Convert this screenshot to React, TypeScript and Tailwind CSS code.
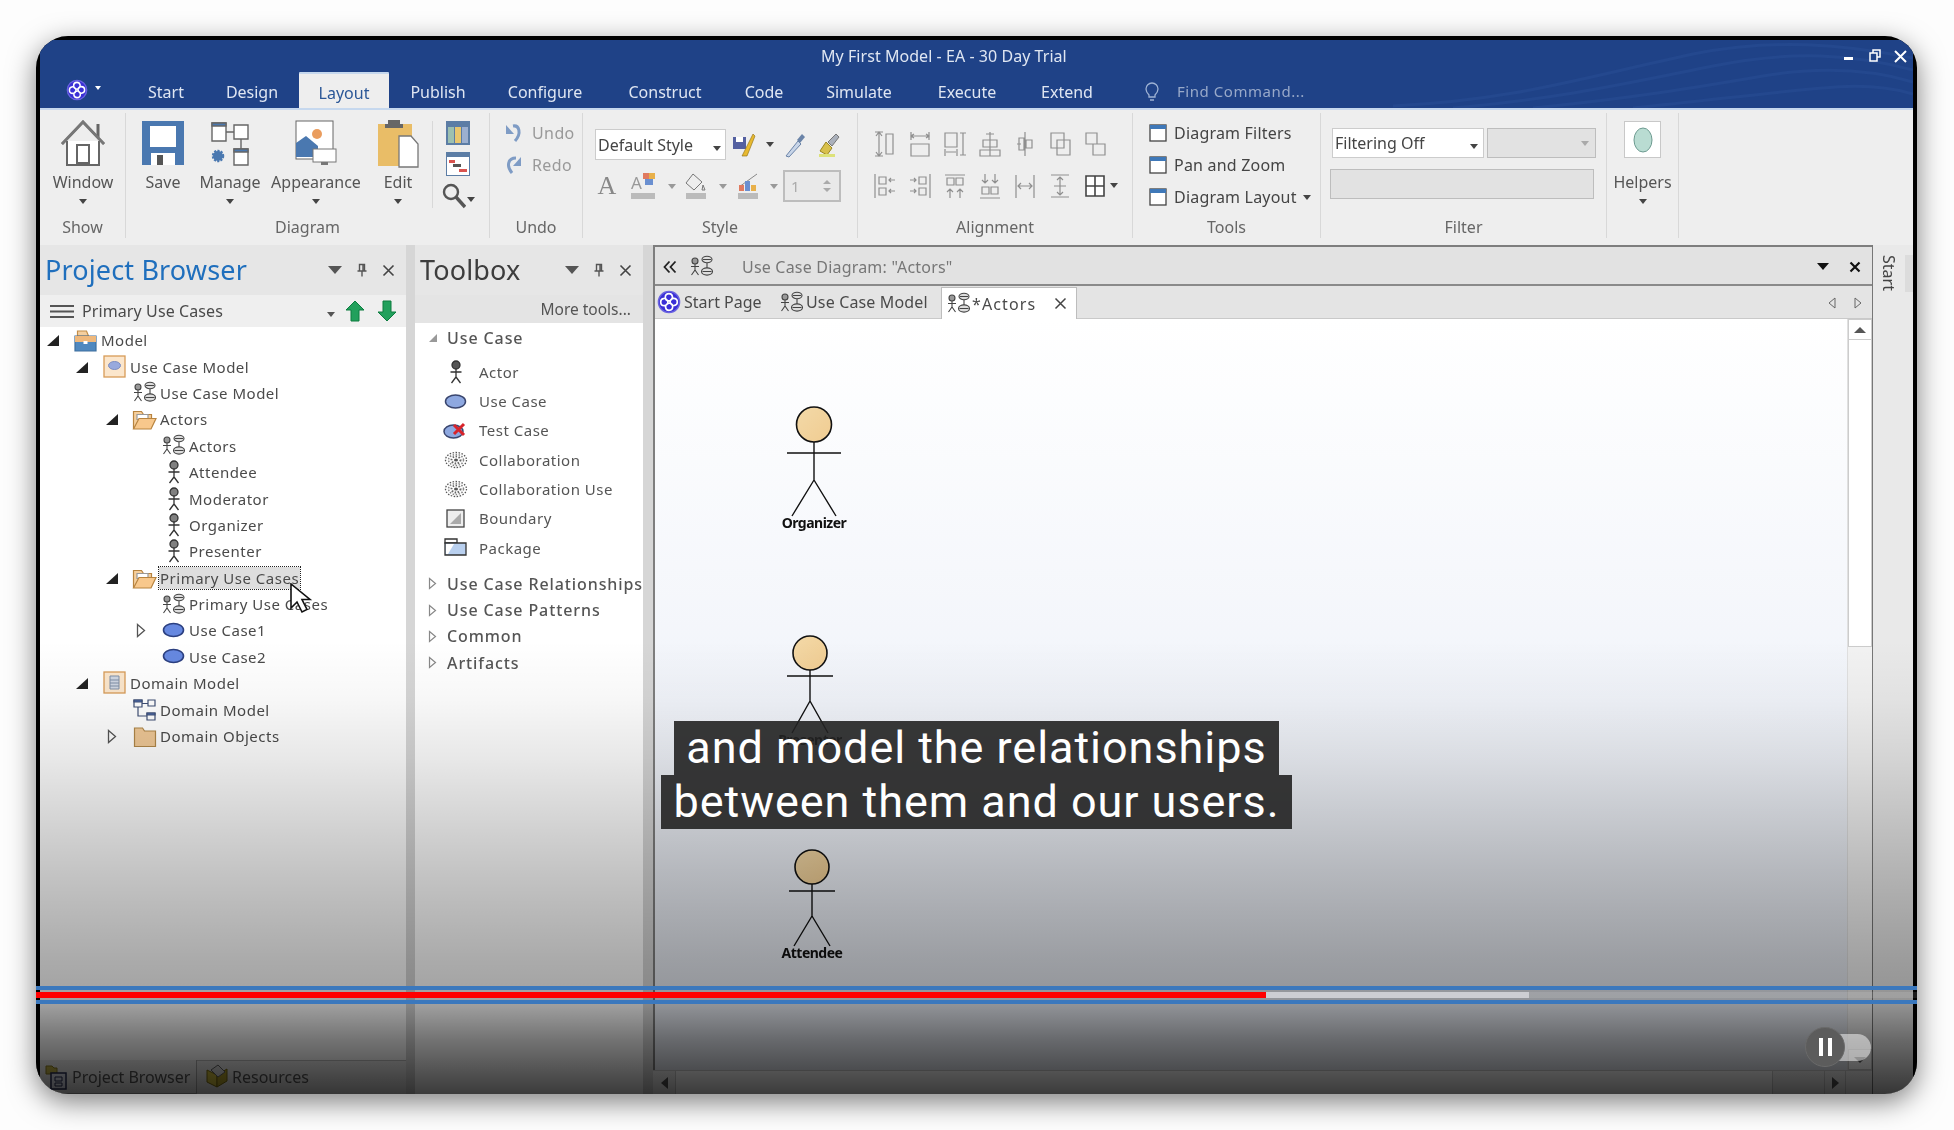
import { ReactNode } from 'react'

function Caret({ className = 'border-t-[#444]' }: { className?: string }) {
  return <span className={`inline-block w-0 h-0 border-x-[4px] border-x-transparent border-t-[5px] ${className}`} />
}

function Logo({ size = 26 }: { size?: number }) {
  return (
    <svg width={size} height={size} viewBox="0 0 26 26" fill="none">
      <circle cx="13" cy="13" r="11.5" fill="#3a2fd6" stroke="#6a63e0" strokeWidth="1.5" />
      <path d="M13 4c4 0 5 5 2 7s-6 0-6-3 2-4 4-4zM13 22c-4 0-5-5-2-7s6 0 6 3-2 4-4 4zM4 13c0-4 5-5 7-2s0 6-3 6-4-2-4-4zM22 13c0 4-5 5-7 2s0-6 3-6 4 2 4 4z" stroke="#fff" strokeWidth="1.8" />
    </svg>
  )
}

function ActorIcon({ dark = false }: { dark?: boolean }) {
  return (
    <svg width="14" height="24" viewBox="0 0 14 24" fill="none" stroke="#333" strokeWidth="1.3">
      <circle cx="7" cy="5" r="4" fill={dark ? '#555' : '#808080'} />
      <path d="M7 9v8M1.5 12h11M7 17l-4.5 6M7 17l4.5 6" />
    </svg>
  )
}

function DiagramIcon() {
  return (
    <svg width="24" height="23" viewBox="0 0 24 23" fill="none" stroke="#444" strokeWidth="1.1">
      <circle cx="5" cy="6" r="3" fill="#999" />
      <path d="M5 9v6M1 11.5h8M5 15l-3.5 5M5 15l3.5 5" />
      <ellipse cx="17" cy="4.5" rx="5" ry="3.2" fill="#ddd" />
      <ellipse cx="17" cy="16.5" rx="5.5" ry="3.6" fill="#ddd" />
      <path d="M13 4.5h8M12.5 16.5h9M17 8v5" />
    </svg>
  )
}

function FolderOpen() {
  return (
    <svg width="25" height="24" viewBox="0 0 25 24" fill="none" stroke="#b8843f" strokeWidth="1.2">
      <path d="M1.5 22V4.5h8l2 3h8v4" fill="#f6cf9c" />
      <path d="M5 7.5h11v5H5z" fill="#fff" stroke="#999" />
      <path d="M1.5 22 7 11.5h17L19 22z" fill="#f8c88c" />
    </svg>
  )
}

function FolderClosed() {
  return (
    <svg width="24" height="23" viewBox="0 0 24 23" fill="#efc896" stroke="#b08749" strokeWidth="1.2">
      <path d="M1.5 21.5V3h8l2 3h11v15.5z" />
    </svg>
  )
}

function ModelIcon() {
  return (
    <svg width="24" height="23" viewBox="0 0 24 23" strokeWidth="1.2">
      <path d="M3.5 7V2h9l2 5z" fill="#f4cf9f" stroke="#c38d47" />
      <path d="M1 7h21v15H1z" fill="#4f88bf" stroke="#3e6f9e" />
      <path d="M1 7h21v6H1z" fill="#efb87b" stroke="none" />
      <rect x="9.5" y="12" width="4" height="3" fill="#fff" />
    </svg>
  )
}

function PackageSquare({ kind }: { kind: 'usecase' | 'domain' }) {
  return (
    <svg width="24" height="24" viewBox="0 0 24 24">
      <rect x="1" y="1" width="21" height="21" fill="#fbe6cc" stroke="#d79c58" strokeWidth="1.3" />
      {kind === 'usecase' ? (
        <ellipse cx="11.5" cy="10.5" rx="6" ry="4" fill="#98a9dd" stroke="#7d8dc0" />
      ) : (
        <path d="M7 5h9v13H7zM7 9h9M7 12h9M7 15h9" fill="#cfd6e2" stroke="#7f8ea5" />
      )}
    </svg>
  )
}

function DomainDiagramIcon() {
  return (
    <svg width="24" height="23" viewBox="0 0 24 23" fill="#fff" stroke="#3f4f75" strokeWidth="1.2">
      <path d="M1 2h8v7H1zM15 2h7v6h-7zM14 15h8v7h-8zM9 5.5h6M5 9v9h9" />
      <path d="M14 15h8v2h-8z" fill="#4f6fb5" />
      <path d="M1 2h8v2H1z" fill="#4f6fb5" />
    </svg>
  )
}

function UseCaseEllipse() {
  return (
    <svg width="23" height="17" viewBox="0 0 23 17">
      <ellipse cx="11.5" cy="8" rx="10" ry="6.500" fill="#6688e0" stroke="#2b3f80" strokeWidth="1.6" />
    </svg>
  )
}

function Expander({ open }: { open: boolean }) {
  return open ? (
    <svg width="14" height="14" viewBox="0 0 14 14"><path d="M13 2v11H1z" fill="#222" /></svg>
  ) : (
    <svg width="10" height="15" viewBox="0 0 10 15" fill="#fff" stroke="#555" strokeWidth="1.3"><path d="M1.500 1.500 8.500 7.500 1.500 13.500z" /></svg>
  )
}

type TreeNode = { label: string; depth: 0 | 1 | 2 | 3; exp?: boolean; icon: ReactNode; selected?: boolean }

const treeNodes: TreeNode[] = [
  { label: 'Model', depth: 0, exp: true, icon: <ModelIcon /> },
  { label: 'Use Case Model', depth: 1, exp: true, icon: <PackageSquare kind="usecase" /> },
  { label: 'Use Case Model', depth: 2, icon: <DiagramIcon /> },
  { label: 'Actors', depth: 2, exp: true, icon: <FolderOpen /> },
  { label: 'Actors', depth: 3, icon: <DiagramIcon /> },
  { label: 'Attendee', depth: 3, icon: <ActorIcon /> },
  { label: 'Moderator', depth: 3, icon: <ActorIcon /> },
  { label: 'Organizer', depth: 3, icon: <ActorIcon /> },
  { label: 'Presenter', depth: 3, icon: <ActorIcon /> },
  { label: 'Primary Use Cases', depth: 2, exp: true, icon: <FolderOpen />, selected: true },
  { label: 'Primary Use Cases', depth: 3, icon: <DiagramIcon /> },
  { label: 'Use Case1', depth: 3, exp: false, icon: <UseCaseEllipse /> },
  { label: 'Use Case2', depth: 3, icon: <UseCaseEllipse /> },
  { label: 'Domain Model', depth: 1, exp: true, icon: <PackageSquare kind="domain" /> },
  { label: 'Domain Model', depth: 2, icon: <DomainDiagramIcon /> },
  { label: 'Domain Objects', depth: 2, exp: false, icon: <FolderClosed /> },
]

const depthPad = ['pl-[6px]', 'pl-[35px]', 'pl-[65px]', 'pl-[94px]']

function ProjectTree() {
  return (
    <div className="relative flex-1 bg-white overflow-hidden">
      {treeNodes.map((n, i) => (
        <div key={i} className={`flex items-center h-[26.4px] ${depthPad[n.depth]}`}>
          <span className="w-[14px] flex justify-center shrink-0">
            {n.exp === undefined ? null : <Expander open={n.exp} />}
          </span>
          <span className="w-[13px] shrink-0" />
          <span className="w-[28px] flex justify-center shrink-0 pr-[3px]">{n.icon}</span>
          <span className={`text-[15px] tracking-[0.5px] text-[#4a4a4a] whitespace-nowrap leading-[22px] ${n.selected ? 'bg-[#dedede] outline-1 outline-dotted outline-[#222] px-[1px] -ml-[1px]' : ''}`}>
            {n.label}
          </span>
        </div>
      ))}
      <svg className="absolute left-[249px] top-[256px]" width="24" height="32" viewBox="0 0 24 32">
        <path d="M2 1v24l6-6 5 10 5-2.500-5-10h8z" fill="#fff" stroke="#111" strokeWidth="1.6" />
      </svg>
    </div>
  )
}

function PanelHeader({ title, blue }: { title: string; blue?: boolean }) {
  return (
    <div className="flex items-center h-[50px] bg-[#e6e6e6] shrink-0">
      <span className={`ml-[5px] text-[27px] tracking-[0.15px] whitespace-nowrap ${blue ? 'text-[#1f6fbd]' : 'text-[#3d3d3d]'}`}>{title}</span>
      <span className="flex items-center ml-auto">
        <span className="w-0 h-0 border-x-[7px] border-x-transparent border-t-[8px] border-t-[#555]" />
        <svg className="ml-[14px]" width="12" height="14" viewBox="0 0 12 14" fill="none" stroke="#555" strokeWidth="1.4"><path d="M3.500 1.500h5v6.500h-5zM1.500 8h9M6 8v5.500M7 2v6" /></svg>
        <svg className="ml-[14px] mr-[11px]" width="13" height="13" viewBox="0 0 13 13" stroke="#444" strokeWidth="1.6"><path d="M1.500 1.500l10 10M11.500 1.500l-10 10" /></svg>
      </span>
    </div>
  )
}

function ProjectBrowser() {
  return (
    <div className="w-[366px] shrink-0 flex flex-col">
      <PanelHeader title="Project Browser" blue />
      <div className="flex items-center h-[32px] bg-[#efefef] shrink-0">
        <svg className="ml-[10px]" width="24" height="15" viewBox="0 0 24 15" stroke="#555" strokeWidth="2.200"><path d="M0 2h24M0 7.500h24M0 13h24" /></svg>
        <span className="ml-[8px] text-[16px] tracking-[0.1px] text-[#4a4a4a] whitespace-nowrap">Primary Use Cases</span>
        <span className="ml-auto"><Caret className="border-t-[#555]" /></span>
        <svg className="ml-[10px]" width="20" height="22" viewBox="0 0 20 22"><path d="M10 1l9 9h-5v11H6V10H1z" fill="#22a05c" stroke="#0c7d3f" /></svg>
        <svg className="ml-[12px] mr-[9px]" width="20" height="22" viewBox="0 0 20 22"><path d="M10 21l9-9h-5V1H6v11H1z" fill="#22a05c" stroke="#0c7d3f" /></svg>
      </div>
      <ProjectTree />
      <div className="flex items-end h-[34px] bg-[#e8e8e8] border-t border-[#bbb] shrink-0">
        <div className="w-[157px] h-[34px] flex items-center -mt-px bg-[#eee] border-r border-b border-[#aaa]">
          <svg className="ml-[5px]" width="24" height="26" viewBox="0 0 24 26"><path d="M1 2h6l2 2h3v6H1z" fill="#c9b94b" stroke="#8b7d20" /><rect x="6" y="9" width="15" height="16" fill="#e4e7f4" stroke="#272d55" strokeWidth="1.5" /><path d="M10 13h7v4h-7zM10 19h7v3h-7z" fill="none" stroke="#272d55" /></svg>
          <span className="ml-[3px] text-[16px] text-[#555] whitespace-nowrap">Project Browser</span>
        </div>
        <div className="h-[34px] flex items-center">
          <svg className="ml-[8px]" width="24" height="26" viewBox="0 0 24 26"><path d="M2 6l10 5v12L2 18z" fill="#d7c540" stroke="#7c6d10" /><path d="M12 11l10-6v12l-10 6z" fill="#bba82e" stroke="#7c6d10" /><path d="M6 6l7-5 7 7-7 5z" fill="#ddd" stroke="#666" /></svg>
          <span className="ml-[3px] text-[16px] text-[#555] whitespace-nowrap">Resources</span>
        </div>
      </div>
    </div>
  )
}

function DitherEllipse() {
  return (
    <svg width="24" height="18" viewBox="0 0 24 18" fill="none" stroke="#555" strokeDasharray="1.500 1.500">
      <ellipse cx="12" cy="9" rx="10.500" ry="7.500" strokeWidth="1.300" />
      <ellipse cx="12" cy="9" rx="7.500" ry="5.500" stroke="#888" strokeWidth="1.500" />
      <ellipse cx="12" cy="9" rx="4.500" ry="3.500" stroke="#666" strokeWidth="2" />
      <ellipse cx="12" cy="9" rx="2" ry="1.500" fill="#555" strokeWidth="0" />
    </svg>
  )
}

const toolItems: { label: string; icon: ReactNode }[] = [
  { label: 'Actor', icon: <ActorIcon dark /> },
  {
    label: 'Use Case',
    icon: (
      <svg width="23" height="17" viewBox="0 0 23 17"><ellipse cx="11.500" cy="8.500" rx="10" ry="6.500" fill="#8ea8e0" stroke="#39456e" strokeWidth="1.500" /></svg>
    ),
  },
  {
    label: 'Test Case',
    icon: (
      <svg width="25" height="19" viewBox="0 0 25 19">
        <ellipse cx="10.500" cy="10.500" rx="9.500" ry="6.500" fill="#8ea8e0" stroke="#39456e" strokeWidth="1.500" />
        <path d="M11 4l10 10M21 3L11 13" stroke="#d8232a" strokeWidth="3" />
      </svg>
    ),
  },
  { label: 'Collaboration', icon: <DitherEllipse /> },
  { label: 'Collaboration Use', icon: <DitherEllipse /> },
  {
    label: 'Boundary',
    icon: (
      <svg width="20" height="20" viewBox="0 0 20 20">
        <rect x="1" y="1" width="17" height="17" fill="#eee" stroke="#444" strokeWidth="1.300" />
        <path d="M4 15 15 4v11z" fill="#aaa" />
      </svg>
    ),
  },
  {
    label: 'Package',
    icon: (
      <svg width="23" height="19" viewBox="0 0 23 19">
        <path d="M1 1h12v4H1z" fill="#fff" stroke="#333" strokeWidth="1.300" />
        <path d="M1 5h21v12H1z" fill="#b9d0ef" stroke="#333" strokeWidth="1.300" />
        <path d="M2 6h8L4 16H2z" fill="#fff" />
      </svg>
    ),
  },
]

function ToolHeader({ label, open }: { label: string; open?: boolean }) {
  return (
    <div className="flex items-center h-[26.4px]">
      <span className="w-[32px] flex justify-center pl-[3px] shrink-0">
        {open ? (
          <svg width="10" height="10" viewBox="0 0 10 10"><path d="M9 1v8H1z" fill="#999" /></svg>
        ) : (
          <svg width="9" height="13" viewBox="0 0 9 13" fill="#fff" stroke="#888" strokeWidth="1.200"><path d="M1.500 1.500 7.500 6.500 1.500 11.500z" /></svg>
        )}
      </span>
      <span className="text-[16px] font-medium tracking-[0.9px] text-[#555] whitespace-nowrap">{label}</span>
    </div>
  )
}

function Toolbox() {
  return (
    <div className="w-[228px] shrink-0 flex flex-col">
      <PanelHeader title="Toolbox" />
      <div className="h-[28px] bg-[#e4e4e4] text-right pr-[12px] text-[15.5px] leading-[28px] text-[#555] whitespace-nowrap shrink-0">More tools...</div>
      <div className="flex-1 bg-white overflow-hidden pt-[2px]">
        <ToolHeader label="Use Case" open />
        <div className="mt-[6px]">
          {toolItems.map((t) => (
            <div key={t.label} className="flex items-center h-[29.3px]">
              <span className="w-[64px] shrink-0 flex justify-center pl-[22px] pr-[5px]">{t.icon}</span>
              <span className="text-[15px] text-[#555] tracking-[0.5px] whitespace-nowrap">{t.label}</span>
            </div>
          ))}
        </div>
        <div className="mt-[8px]">
          {['Use Case Relationships', 'Use Case Patterns', 'Common', 'Artifacts'].map((l) => (
            <ToolHeader key={l} label={l} />
          ))}
        </div>
      </div>
    </div>
  )
}

function StickFigure({ cx, top, r, body, arm, legX, legY, name }: { cx: number; top: number; r: number; body: [number, number]; arm: number; legX: number; legY: number; name: string }) {
  // free canvas item: place comes from the diagram itself
  const w = 120
  const mid = w / 2
  const height = legY + 30
  return (
    <div className="absolute" style={{ left: cx - mid, top, width: w, height }}>
      <svg width={w} height={legY + 2} viewBox={`0 0 ${w} ${legY + 2}`} fill="none" stroke="#111" strokeWidth="1.4">
        <defs>
          <linearGradient id={`head-${name}`} x1="0" x2="1" y1="0" y2="1">
            <stop offset="0" stopColor="#f3d9a8" />
            <stop offset="1" stopColor="#f0cc91" />
          </linearGradient>
        </defs>
        <circle cx={mid} cy={r + 1} r={r} fill={`url(#head-${name})`} strokeWidth="1.6" />
        <path d={`M${mid} ${r * 2 + 1}V${body[1]}M${mid - arm} ${body[0]}H${mid + arm}M${mid} ${body[1]}L${mid - legX} ${legY}M${mid} ${body[1]}L${mid + legX} ${legY}`} />
      </svg>
      <div className="-mt-[4px] text-center text-[14px] font-bold tracking-[-0.5px] leading-[18px] text-[#111]">{name}</div>
    </div>
  )
}

function DocArea() {
  return (
    <div className="w-[1219px] shrink-0 flex flex-col border-l-2 border-t-2 border-[#7e7e7e]">
      <div className="flex items-center h-[39px] pt-[2px] bg-[#e2e2e2] border-b-2 border-[#8a8a8a] shrink-0">
        <svg className="ml-[8px]" width="14" height="14" viewBox="0 0 14 14" fill="none" stroke="#222" strokeWidth="1.800"><path d="M6.500 1.500 1.500 7l5 5.500M12.500 1.500 7.500 7l5 5.500" /></svg>
        <span className="ml-[13px]"><DiagramIcon /></span>
        <span className="ml-[28px] text-[16px] tracking-[0.2px] text-[#777] whitespace-nowrap">Use Case Diagram: "Actors"</span>
        <span className="ml-auto w-0 h-0 border-x-[6px] border-x-transparent border-t-[7px] border-t-[#111]" />
        <svg className="ml-[20px] mr-[11px]" width="12" height="12" viewBox="0 0 12 12" stroke="#111" strokeWidth="2.200"><path d="M1.500 1.500l9 9M10.500 1.500l-9 9" /></svg>
      </div>
      <div className="flex items-end h-[33px] bg-[#e4e4e4] border-b border-[#c9c9c9] shrink-0">
        <div className="flex items-center h-[32px] pl-[2px] w-[125px]">
          <Logo size={24} />
          <span className="ml-[3px] text-[16px] text-[#4a4a4a] whitespace-nowrap">Start Page</span>
        </div>
        <div className="flex items-center h-[32px] w-[161px]">
          <DiagramIcon />
          <span className="ml-[2px] text-[16px] tracking-[0.15px] text-[#4a4a4a] whitespace-nowrap">Use Case Model</span>
        </div>
        <div className="flex items-center h-[32px] w-[136px] bg-white border-x border-t border-[#bdbdbd] pl-[5px] -mb-px">
          <DiagramIcon />
          <span className="ml-[1px] text-[16px] tracking-[1.1px] text-[#4a4a4a] whitespace-nowrap">*Actors</span>
          <svg className="ml-[18px]" width="13" height="13" viewBox="0 0 13 13" stroke="#444" strokeWidth="1.500"><path d="M1.500 1.500l10 10M11.500 1.500l-10 10" /></svg>
        </div>
        <div className="flex items-center h-[31px] ml-auto pr-[10px] gap-[18px]">
          <svg width="8" height="12" viewBox="0 0 8 12" fill="#e4e4e4" stroke="#666"><path d="M7 1 1 6l6 5z" /></svg>
          <svg width="8" height="12" viewBox="0 0 8 12" fill="#e4e4e4" stroke="#666"><path d="M1 1l6 5-6 5z" /></svg>
        </div>
      </div>
      <div className="flex flex-1 min-h-0 bg-white">
        <div className="relative flex-1 overflow-hidden bg-[linear-gradient(to_bottom,#ffffff_0%,#f1f4fa_50%,#e4e8f0_100%)]">
          <StickFigure cx={159} top={87} r={17.5} body={[47, 74]} arm={27} legX={22} legY={110} name="Organizer" />
          <StickFigure cx={155} top={316} r={17} body={[41, 66]} arm={23} legX={18} legY={98} name="Presenter" />
          <StickFigure cx={157} top={530} r={17} body={[42, 67]} arm={23} legX={18} legY={97} name="Attendee" />
        </div>
        <div className="w-[25px] shrink-0 flex flex-col bg-[#f2f2f2] border-l border-[#e0e0e0]">
          <div className="h-[21px] bg-white border border-[#ccc] flex items-center justify-center">
            <span className="w-0 h-0 border-x-[6px] border-x-transparent border-b-[6px] border-b-[#555]" />
          </div>
          <div className="h-[307px] bg-white border border-[#ccc] border-t-0" />
          <div className="flex-1" />
          <div className="h-[21px] mb-[24px] bg-white border border-[#ccc] flex items-center justify-center">
            <span className="w-0 h-0 border-x-[6px] border-x-transparent border-t-[6px] border-t-[#555]" />
          </div>
        </div>
      </div>
    </div>
  )
}

function RightStrip() {
  return (
    <div className="w-[41px] shrink-0 bg-[#e9e9e9] border-l border-[#777] flex items-start pt-[10px]">
      <span className="ml-[6px] text-[16px] text-[#444] [writing-mode:vertical-rl] leading-[20px]">Start</span>
      <span className="ml-auto w-[8px] h-[37px] bg-[#dcdcdc]" />
    </div>
  )
}

function BigButton({ w, label, children, caret = true }: { w: string; label: string; children: ReactNode; caret?: boolean }) {
  return (
    <div className={`${w} shrink-0 flex flex-col items-center`}>
      <div className="h-[50px] mt-[5px] flex items-center justify-center">{children}</div>
      <div className="mt-[2px] h-[24px] text-[16px] leading-[24px] text-[#555] whitespace-nowrap">{label}</div>
      {caret && <div className="mt-[3px] h-[8px] flex items-center"><Caret /></div>}
    </div>
  )
}

function RibbonGroup({ w, label, children }: { w: string; label: string; children: ReactNode }) {
  return (
    <div className={`${w} shrink-0 h-[125px] flex flex-col border-r border-[#d8d8d8]`}>
      <div className="flex-1 min-h-0">{children}</div>
      <div className="h-[20px] mb-[1px] leading-[20px] text-center text-[16px] text-[#666]">{label}</div>
    </div>
  )
}

const g = '#8f8f8f'
const alignPaths: string[] = [
  'M2 2h8M2 26h8M6 2v24M3 6l3-4 3 4M3 22l3 4 3-4M13 4h7v20h-7z',
  'M3 2v8M21 2v8M3 6h18M6 4 3 6l3 2M18 4l3 2-3 2M3 14h18v12H3z',
  'M2 3h12v14H2zM17 3h6M17 25h6M20 3v22M3 22h10M2 19v7M14 19v7',
  'M12 2v24M5 10h14v7H5zM2 20h20v6H2zM8 4h8',
  'M12 2v24M6 8h5v12H6zM13 10h6v8h-6zM4 14h4',
  'M3 3h13v15H3zM9 10h13v15H9z',
  'M3 3h11v11H3zM10 14h12v11H10z',
  'M2 2v24M6 5h7v7H6zM6 16h7v7H6zM22 8h-6M18 6l-2 2 2 2M22 19h-6M18 17l-2 2 2 2',
  'M22 2v24M11 5h7v7h-7zM11 16h7v7h-7zM2 8h6M6 6l2 2-2 2M2 19h6M6 17l2 2-2 2',
  'M2 3h20M4 6h7v7H4zM13 6h7v7h-7zM7 26v-9M4 20l3-3 3 3M17 26v-9M14 20l3-3 3 3',
  'M2 26h20M4 15h7v7H4zM13 15h7v7h-7zM7 2v9M4 8l3 3 3-3M17 2v9M14 8l3 3 3-3',
  'M3 3v23M21 3v23M5 14h14M8 11l-3 3 3 3M16 11l3 3-3 3',
  'M3 3h18M3 25h18M12 5v18M9 8l3-3 3 3M9 20l3 3 3-3M6 14h12',
]

function AlignIcon({ d }: { d: string }) {
  return (
    <svg width="24" height="28" viewBox="0 0 24 28" fill="none" stroke={g} strokeWidth="1.200"><path d={d} /></svg>
  )
}

function WindowMini({ label, caret }: { label: string; caret?: boolean }) {
  return (
    <div className="flex items-center h-[32px]">
      <svg width="18" height="18" viewBox="0 0 18 18"><rect x="1" y="1" width="16" height="16" fill="#fff" stroke="#444" strokeWidth="1.300" /><rect x="1" y="1" width="16" height="4" fill="#3f78b8" /></svg>
      <span className="ml-[7px] text-[16px] tracking-[0.2px] text-[#444] whitespace-nowrap">{label}</span>
      {caret && <span className="ml-[6px] -mt-[6px]"><Caret /></span>}
    </div>
  )
}

function Ribbon() {
  return (
    <div className="h-[137px] bg-[#eeeeee] border-t-2 border-[#c6d8ee] flex items-start pt-[3px] shrink-0">
      <RibbonGroup w="w-[86px]" label="Show">
        <BigButton w="w-[86px]" label="Window">
          <svg width="46" height="48" viewBox="0 0 46 48" fill="none" stroke="#666" strokeWidth="2"><path d="M2 25 23 3l21 22" /><path d="M38 18V5" strokeWidth="3" /><path d="M7 22v24h32V22" fill="#fff" /><rect x="17" y="26" width="12" height="18" fill="#fff" /><path d="M2 25 23 3l21 22" stroke="#777" strokeWidth="3" /></svg>
        </BigButton>
      </RibbonGroup>
      <RibbonGroup w="w-[364px]" label="Diagram">
        <div className="flex pl-[7px]">
          <BigButton w="w-[60px]" label="Save" caret={false}>
            <svg width="42" height="44" viewBox="0 0 42 44"><path d="M0 0h42v44H0z" fill="#4a78b0" /><rect x="8" y="5" width="26" height="21" fill="#fff" /><rect x="9" y="32" width="24" height="12" fill="#fff" /><rect x="15" y="34" width="6" height="10" fill="#555" /></svg>
          </BigButton>
          <BigButton w="w-[74px]" label="Manage">
            <svg width="42" height="48" viewBox="0 0 42 48" fill="#fff" stroke="#666" strokeWidth="1.400"><path d="M3 4h14v18H3zM25 6h14v14H25zM25 30h14v16H25zM17 13h8M32 20v10" /><path d="M3 4h14v3H3zM25 30h14v3H25z" fill="#4a78b0" /><circle cx="9" cy="37" r="5" fill="#4a78b0" stroke="#4a78b0" strokeDasharray="2 1.200" strokeWidth="2.500" /></svg>
          </BigButton>
          <BigButton w="w-[98px]" label="Appearance">
            <svg width="42" height="48" viewBox="0 0 42 48"><rect x="1" y="2" width="37" height="38" fill="#fff" stroke="#666" /><circle cx="22" cy="15" r="5" fill="#ea9d5e" /><path d="M1 38V24l10-7 12 10v11z" fill="#4a78b0" /><rect x="18" y="30" width="23" height="13" fill="#fff" stroke="#777" /><path d="M26 43h7v3h-7z" fill="#777" /></svg>
          </BigButton>
          <BigButton w="w-[66px]" label="Edit">
            <svg width="42" height="50" viewBox="0 0 42 50"><rect x="1" y="6" width="34" height="42" fill="#e9bd67" /><path d="M11 6V2h12v4h3v4H8V6z" fill="#666" /><path d="M22 18h12l7 8v23H22z" fill="#fff" stroke="#777" strokeWidth="1.300" /></svg>
          </BigButton>
          <div className="ml-[1px] mt-[8px] w-px h-[87px] bg-[#d8d8d8]" />
          <div className="flex flex-col items-center w-[50px] pt-[8px] gap-[7px]">
            <svg width="24" height="24" viewBox="0 0 24 24"><rect width="24" height="24" fill="#5c7da5" /><rect x="2" y="6" width="6" height="16" fill="#9cc0b0" /><rect x="9" y="6" width="6" height="16" fill="#e8c66e" /><rect x="16" y="6" width="6" height="16" fill="#9cb0d0" /></svg>
            <svg width="24" height="24" viewBox="0 0 24 24"><rect width="24" height="24" fill="#5c7da5" /><rect x="1" y="5" width="22" height="18" fill="#fff" /><path d="M3 8h6v3H3z" fill="#d9534f" /><path d="M7 12h8v3H7z" fill="#555" /><path d="M13 17h8v3h-8z" fill="#d9534f" /></svg>
            <div className="flex items-center">
              <svg width="24" height="26" viewBox="0 0 24 26" fill="none" stroke="#555" strokeWidth="2.400"><circle cx="9" cy="9" r="7" /><path d="M14 14l9 10" strokeWidth="3.400" /></svg>
              <span className="ml-[1px]"><Caret /></span>
            </div>
          </div>
        </div>
      </RibbonGroup>
      <RibbonGroup w="w-[93px]" label="Undo">
        <div className="pl-[14px] pt-[4px] flex flex-col">
          <div className="flex items-center h-[32px]">
            <svg width="19" height="20" viewBox="0 0 19 20" fill="none" stroke="#7f9cc5" strokeWidth="3"><path d="M9 3c6-1 9 7 2 15" /><path d="M2 2v9h8z" fill="#7f9cc5" strokeWidth="0" /></svg>
            <span className="ml-[9px] text-[16px] tracking-[0.4px] text-[#999]">Undo</span>
          </div>
          <div className="flex items-center h-[32px]">
            <svg width="19" height="20" viewBox="0 0 19 20" fill="none" stroke="#7f9cc5" strokeWidth="3"><path d="M12 3C4 3 2 11 8 18" /><path d="M17 2v9H9z" fill="#7f9cc5" strokeWidth="0" /></svg>
            <span className="ml-[9px] text-[16px] tracking-[0.4px] text-[#999]">Redo</span>
          </div>
        </div>
      </RibbonGroup>
      <RibbonGroup w="w-[275px]" label="Style">
        <div className="pl-[12px] pt-[16px]">
          <div className="flex items-center h-[31px]">
            <div className="w-[131px] h-[31px] bg-white border border-[#ccc] flex items-center pl-[2px] pr-[4px] text-[16px] text-[#444] whitespace-nowrap">
              Default Style
              <span className="ml-auto"><Caret /></span>
            </div>
            <svg className="ml-[6px]" width="24" height="26" viewBox="0 0 24 26"><rect x="1" y="5" width="13" height="12" fill="#5460a0" /><rect x="4" y="5" width="7" height="5" fill="#fff" /><path d="M10 24 21 2l2 2-8 20z" fill="#e7b930" stroke="#8a6a10" strokeWidth="0.6" /></svg>
            <span className="ml-[10px] flex"><Caret /></span>
            <svg className="ml-[10px]" width="22" height="26" viewBox="0 0 22 26"><path d="M2 24 14 9l3 3L5 25z" fill="#c8d5e8" stroke="#6b84a8" /><path d="M13 8l5-6 3 3-5 6z" fill="#6b84a8" /></svg>
            <svg className="ml-[12px]" width="22" height="26" viewBox="0 0 22 26"><path d="M2 19l6-9 6 6-5 7z" fill="#d8c04c" stroke="#9a8520" /><path d="M10 10l8-8 3 3-7 9z" fill="#aab0bb" stroke="#777" /><rect x="1" y="22" width="16" height="3" fill="#dde27a" /></svg>
          </div>
          <div className="flex items-center h-[32px] mt-[10px]">
            <span className="w-[24px] text-center font-['Liberation_Serif',serif] text-[26px] leading-[30px] text-[#888]">A</span>
            <div className="ml-[12px] w-[26px] flex flex-col items-start">
              <div className="relative h-[20px] w-[26px] flex items-start">
                <span className="text-[17px] leading-[20px] text-[#999]">A</span>
                <svg className="ml-[1px]" width="13" height="13" viewBox="0 0 13 13"><rect x="0" y="0" width="6" height="6" fill="#e07a5f" /><rect x="6" y="0" width="6" height="6" fill="#e8b04a" /><rect x="2" y="6" width="8" height="6" fill="#6a8fd0" /></svg>
              </div>
              <div className="w-[24px] h-[6px] bg-[#bbb]" />
            </div>
            <span className="ml-[11px] flex"><Caret className="border-t-[#999]" /></span>
            <svg className="ml-[9px]" width="22" height="28" viewBox="0 0 22 28" fill="#eee" stroke="#777"><path d="M8 2 1 11l8 7 8-8zM18 13l2 5h-3z" /><rect x="1" y="21" width="20" height="6" fill="#bbb" stroke="none" /></svg>
            <span className="ml-[12px] flex"><Caret className="border-t-[#999]" /></span>
            <svg className="ml-[10px]" width="22" height="28" viewBox="0 0 22 28"><path d="M2 15 20 2" stroke="#888" /><rect x="2" y="13" width="5" height="6" fill="#e07a5f" /><rect x="8" y="9" width="5" height="10" fill="#6a8fd0" /><rect x="14" y="13" width="5" height="6" fill="#e8b04a" /><rect x="1" y="21" width="20" height="6" fill="#bbb" /></svg>
            <span className="ml-[11px] flex"><Caret className="border-t-[#999]" /></span>
            <div className="ml-[5px] w-[58px] h-[32px] bg-[#e9e9e9] border-2 border-[#bdbdbd] flex items-center pl-[6px] text-[15px] text-[#aaa]">
              1
              <span className="ml-auto mr-[8px] flex flex-col gap-[4px]">
                <span className="w-0 h-0 border-x-[4px] border-x-transparent border-b-[4px] border-b-[#aaa]" />
                <span className="w-0 h-0 border-x-[4px] border-x-transparent border-t-[4px] border-t-[#aaa]" />
              </span>
            </div>
          </div>
        </div>
      </RibbonGroup>
      <RibbonGroup w="w-[275px]" label="Alignment">
        <div className="pl-[9px] pt-[16px] grid grid-cols-[repeat(7,35px)] gap-y-[12px]">
          {alignPaths.map((d, i) => (
            <div key={i} className="h-[30px] flex items-center justify-center"><AlignIcon d={d} /></div>
          ))}
          <div className="h-[30px] flex items-center justify-center relative">
            <svg width="22" height="24" viewBox="0 0 22 24" fill="#fff" stroke="#444" strokeWidth="1.600"><path d="M2 2h18v20H2zM11 2v20M2 12h18" /></svg>
            <span className="absolute -right-[6px] top-[12px] flex"><Caret /></span>
          </div>
        </div>
      </RibbonGroup>
      <RibbonGroup w="w-[188px]" label="Tools">
        <div className="pl-[16px] pt-[4px] flex flex-col">
          <WindowMini label="Diagram Filters" />
          <WindowMini label="Pan and Zoom" />
          <WindowMini label="Diagram Layout" caret />
        </div>
      </RibbonGroup>
      <RibbonGroup w="w-[286px]" label="Filter">
        <div className="pl-[11px] pt-[15px]">
          <div className="flex gap-[3px] h-[30px]">
            <div className="w-[152px] bg-white border border-[#ccc] flex items-center pl-[2px] pr-[5px] text-[16px] text-[#444] whitespace-nowrap">
              Filtering Off
              <span className="ml-auto"><Caret /></span>
            </div>
            <div className="w-[109px] bg-[#e2e2e2] border border-[#bdbdbd] flex items-center justify-end pr-[6px]">
              <Caret className="border-t-[#aaa]" />
            </div>
          </div>
          <div className="mt-[11px] -ml-[2px] w-[264px] h-[30px] bg-[#e2e2e2] border border-[#bdbdbd]" />
        </div>
      </RibbonGroup>
      <RibbonGroup w="w-[72px]" label="">
        <div className="flex flex-col items-center pt-[8px]">
          <div className="w-[37px] h-[37px] bg-white border border-[#c8c8c8] flex items-center justify-center">
            <svg width="20" height="26" viewBox="0 0 20 26"><ellipse cx="10" cy="13" rx="9" ry="12" fill="#b9dcd2" stroke="#6c9a90" /></svg>
          </div>
          <div className="mt-[12px] h-[24px] text-[16px] leading-[24px] text-[#555]">Helpers</div>
          <div className="mt-[3px] h-[8px] flex items-center"><Caret /></div>
        </div>
      </RibbonGroup>
    </div>
  )
}

const tabs: [string, string][] = [
  ['Start', 'w-[78px]'],
  ['Design', 'w-[94px]'],
  ['Layout', 'w-[90px]'],
  ['Publish', 'w-[98px]'],
  ['Configure', 'w-[116px]'],
  ['Construct', 'w-[124px]'],
  ['Code', 'w-[74px]'],
  ['Simulate', 'w-[116px]'],
  ['Execute', 'w-[100px]'],
  ['Extend', 'w-[100px]'],
]

function TitleBar() {
  return (
    <div className="relative h-[68px] bg-[#1f4287] shrink-0 overflow-hidden">
      <svg className="absolute right-0 top-0" width="520" height="68" viewBox="0 0 520 68" fill="none" stroke="#24488e" strokeWidth="3">
        <path d="M0 66C120 60 180 40 300 14 380 -2 450 4 520 18" />
        <path d="M60 68C170 58 230 44 320 26 400 10 460 14 520 30" />
        <path d="M140 68C240 58 300 48 370 36 430 26 480 30 520 42" />
        <path d="M240 68C320 60 380 52 430 48 470 44 500 48 520 54" />
      </svg>
      <div className="relative flex items-center h-[32px]">
        <span className="ml-[781px] text-[16px] tracking-[0.05px] text-[#dfe6f2] whitespace-nowrap">My First Model - EA - 30 Day Trial</span>
        <span className="ml-auto flex items-center mr-[6px]">
          <svg width="10" height="10" viewBox="0 0 10 10"><rect x="0" y="6" width="9" height="3" fill="#fff" /></svg>
          <svg className="ml-[15px]" width="12" height="14" viewBox="0 0 12 14" fill="none" stroke="#fff" strokeWidth="1.500"><path d="M4 4V1h7v7H8M1 4h7v8H1z" /></svg>
          <svg className="ml-[13px]" width="13" height="13" viewBox="0 0 13 13" stroke="#fff" strokeWidth="2"><path d="M1 1l11 11M12 1 1 12" /></svg>
        </span>
      </div>
      <div className="relative flex items-stretch h-[36px]">
        <div className="w-[87px] flex items-center pl-[26px]">
          <Logo size={22} />
          <span className="ml-[7px] mb-[4px] w-0 h-0 border-x-[3.5px] border-x-transparent border-t-[4px] border-t-white" />
        </div>
        {tabs.map(([t, w]) => (
          <div key={t} className={`${w} flex items-center justify-center pt-[3px] text-[16px] whitespace-nowrap ${t === 'Layout' ? 'bg-[#eeeeee] text-[#2b5797] rounded-t-[1px] border-t-2 border-[#c6d8ee] pt-[1px]' : 'text-[#dfe6f2]'}`}>
            {t}
          </div>
        ))}
        <svg className="ml-[28px] self-center mt-[3px]" width="14" height="20" viewBox="0 0 14 20" fill="none" stroke="#9eb2d4" strokeWidth="1.300"><path d="M4 13C2 11 1 9.500 1 7a6 6 0 0 1 12 0c0 2.500-1 4-3 6v2H4zM5 18h4" /></svg>
        <span className="ml-[18px] self-center mt-[3px] text-[15px] tracking-[0.55px] text-[#98a9c9] whitespace-nowrap">Find Command...</span>
      </div>
    </div>
  )
}

function HScrollBar() {
  return (
    <div className="absolute left-[617px] bottom-0 w-[1219px] h-[24px] flex bg-[#f0f0f0] border-t border-[#ccc]">
      <div className="w-[23px] border-r border-[#ccc] flex items-center justify-center">
        <span className="w-0 h-0 border-y-[6px] border-y-transparent border-r-[7px] border-r-[#555]" />
      </div>
      <div className="w-[1097px] bg-white border-r border-[#ccc]" />
      <div className="flex-1" />
      <div className="w-[22px] border-x border-[#ccc] flex items-center justify-center mr-[26px]">
        <span className="w-0 h-0 border-y-[6px] border-y-transparent border-l-[7px] border-l-[#555]" />
      </div>
    </div>
  )
}

export default function App() {
  return (
    <div className="w-[1954px] h-[1130px] overflow-hidden bg-[#fdfdfd] pl-[36px] pt-[36px] font-['Noto_Sans',sans-serif]">
      <div className="relative w-[1881px] h-[1058px] rounded-[32px] overflow-hidden bg-black px-[4px] pt-[4px] shadow-[0_8px_28px_rgba(0,0,0,0.5)]">
        <div className="flex flex-col h-full bg-[#e0e0e0] blur-[0.45px]">
          <TitleBar />
          <Ribbon />
          <div className="flex flex-1 min-h-0 bg-[#d9d9d9]">
            <ProjectBrowser />
            <div className="w-[9px] shrink-0 bg-[#d6d6d6]" />
            <Toolbox />
            <div className="w-[10px] shrink-0 bg-[#d6d6d6]" />
            <DocArea />
            <RightStrip />
          </div>
        </div>
        <HScrollBar />

        {/* player chrome on top of the video */}
        <div className="absolute left-0 right-0 bottom-0 h-[454px] bg-[linear-gradient(to_bottom,rgba(0,0,0,0)_0%,rgba(0,0,0,0.03)_13%,rgba(0,0,0,0.09)_26%,rgba(0,0,0,0.23)_51%,rgba(0,0,0,0.33)_70%,rgba(0,0,0,0.37)_80%,rgba(0,0,0,0.55)_88%,rgba(0,0,0,0.77)_100%)]" />

        <div className="absolute left-0 right-0 top-[685px] flex flex-col items-center font-['Roboto',sans-serif] text-[45px] tracking-[0.95px] leading-[54px] text-white">
          <div className="h-[54px] px-[12px] bg-[#222222]/90 whitespace-nowrap">and model the relationships</div>
          <div className="h-[54px] px-[12px] bg-[#222222]/90 whitespace-nowrap">between them and our users.</div>
        </div>

        <div className="absolute left-0 right-0 top-[950px] flex flex-col">
          <div className="h-[4px] bg-[#3b78bd]" />
          <div className="flex h-[6px] mt-[2px] bg-white/10">
            <div className="w-[1230px] bg-[#ff0000]" />
            <div className="w-[263px] bg-[#cdced3]" />
          </div>
          <div className="h-[4px] mt-[2px] bg-[#3b78bd]" />
        </div>

        <div className="absolute left-[1769px] top-[991px] flex items-center">
          <div className="relative z-10 w-[40px] h-[40px] rounded-full bg-[#5c5c5c] border border-[#6a6a6a] flex items-center justify-center gap-[5px]">
            <span className="w-[4px] h-[18px] bg-white" />
            <span className="w-[4px] h-[18px] bg-white" />
          </div>
          <div className="-ml-[8px] w-[34px] h-[27px] rounded-r-full bg-white/50" />
        </div>
      </div>
    </div>
  )
}
